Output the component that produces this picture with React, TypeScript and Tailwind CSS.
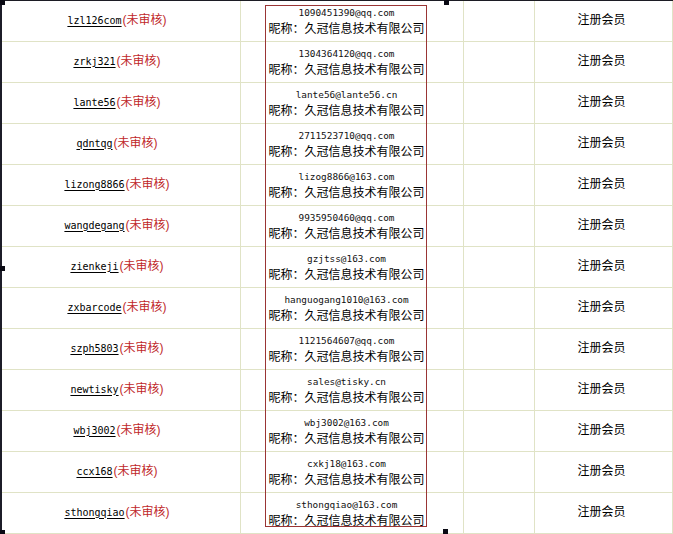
const rows = [
  { user: 'lzl126com', email: '1090451390@qq.com' },
  { user: 'zrkj321', email: '1304364120@qq.com' },
  { user: 'lante56', email: 'lante56@lante56.cn' },
  { user: 'qdntqg', email: '2711523710@qq.com' },
  { user: 'lizong8866', email: 'lizog8866@163.com' },
  { user: 'wangdegang', email: '9935950460@qq.com' },
  { user: 'zienkeji', email: 'gzjtss@163.com' },
  { user: 'zxbarcode', email: 'hanguogang1010@163.com' },
  { user: 'szph5803', email: '1121564607@qq.com' },
  { user: 'newtisky', email: 'sales@tisky.cn' },
  { user: 'wbj3002', email: 'wbj3002@163.com' },
  { user: 'ccx168', email: 'cxkj18@163.com' },
  { user: 'sthongqiao', email: 'sthongqiao@163.com' },
]

const mono = "font-['DejaVu_Sans_Mono','Liberation_Mono','Noto_Sans_CJK_SC',monospace]"
const cjk = "font-['Liberation_Sans','Noto_Sans_CJK_SC',sans-serif]"

function Handle({ className }: { className: string }) {
  return <div className={`absolute h-[5px] w-[5px] bg-[#0a0a14] ${className}`} />
}

export default function App() {
  return (
    <div className="relative h-[534px] w-[673px] overflow-hidden bg-white">
      <div className="flex flex-col border-t border-t-[#1c1c24] border-l-2 border-l-[#1c1c28]">
        {rows.map((r) => (
          <div
            key={r.user}
            className="grid h-[41px] grid-cols-[239px_223px_71px_137px_1px] border-b border-[#e0e3c6]"
          >
            <div className="flex items-center justify-center border-r border-[#e0e3c6] pr-2 pb-[2px]">
              <a className={`${mono} text-[10px] text-black underline underline-offset-2`}>{r.user}</a>
              <span className={`${cjk} ml-[1px] text-[12px] text-[#c0282a]`}>(未审核)</span>
            </div>
            <div className="flex flex-col items-center justify-center border-r border-[#e0e3c6] pr-[11px] pb-[1px] leading-[17px]">
              <span className={`${mono} text-[9.4px] text-[#111]`}>{r.email}</span>
              <span className={`${cjk} text-[12px] text-black`}>昵称：久冠信息技术有限公司</span>
            </div>
            <div className="border-r border-[#e0e3c6]" />
            <div className="flex items-center justify-center pr-1 pb-[2px]">
              <span className={`${cjk} text-[12px] text-black`}>注册会员</span>
            </div>
            <div className="bg-[#e0e3c6]" />
          </div>
        ))}
      </div>

      <div className="pointer-events-none absolute left-[265px] top-[5px] h-[522px] w-[162px] border border-[#9a3535]" />

      <Handle className="left-0 top-0" />
      <Handle className="left-[444px] top-0" />
      <Handle className="left-0 top-[266px]" />
      <Handle className="left-0 top-[530px]" />
      <Handle className="left-[443px] top-[529px]" />
    </div>
  )
}
